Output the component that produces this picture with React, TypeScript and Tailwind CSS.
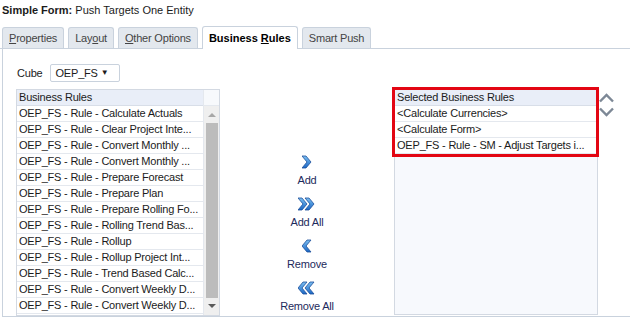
const leftRules = [
  'OEP_FS - Rule - Calculate Actuals',
  'OEP_FS - Rule - Clear Project Inte...',
  'OEP_FS - Rule - Convert Monthly ...',
  'OEP_FS - Rule - Convert Monthly ...',
  'OEP_FS - Rule - Prepare Forecast',
  'OEP_FS - Rule - Prepare Plan',
  'OEP_FS - Rule - Prepare Rolling Fo...',
  'OEP_FS - Rule - Rolling Trend Bas...',
  'OEP_FS - Rule - Rollup',
  'OEP_FS - Rule - Rollup Project Int...',
  'OEP_FS - Rule - Trend Based Calc...',
  'OEP_FS - Rule - Convert Weekly D...',
  'OEP_FS - Rule - Convert Weekly D...',
];

const selectedRules = [
  '<Calculate Currencies>',
  '<Calculate Form>',
  'OEP_FS - Rule - SM - Adjust Targets i...',
];

const tabs = [
  { label: 'Properties', u: 0 },
  { label: 'Layout', u: 3 },
  { label: 'Other Options', u: 0 },
  { label: 'Business Rules', u: 9, active: true },
  { label: 'Smart Push', u: -1 },
];

function Chevron({ dir, double }: { dir: 'right' | 'left'; double?: boolean }) {
  const one = (x: number) =>
    dir === 'right'
      ? `M${x} 1 L${x + 4} 1 L${x + 9} 7 L${x + 4} 13 L${x} 13 L${x + 5} 7 Z`
      : `M${x + 9} 1 L${x + 5} 1 L${x} 7 L${x + 5} 13 L${x + 9} 13 L${x + 4} 7 Z`;
  const xs = double ? [0, 7] : [0];
  return (
    <svg width={double ? 17 : 10} height="14" viewBox={`0 0 ${double ? 17 : 10} 14`}>
      <defs>
        <linearGradient id="chev" x1="0" y1="0" x2="0" y2="1">
          <stop offset="0" stopColor="#7cc0f2" />
          <stop offset="1" stopColor="#1a66c4" />
        </linearGradient>
      </defs>
      {xs.map((x) => (
        <path key={x} d={one(x)} fill="url(#chev)" stroke="#1d4f9a" strokeWidth="0.8" strokeLinejoin="round" />
      ))}
    </svg>
  );
}

function MoveButton({ label, dir, double }: { label: string; dir: 'right' | 'left'; double?: boolean }) {
  return (
    <div className="flex flex-col items-center">
      <Chevron dir={dir} double={double} />
      <span className="text-[11px] tracking-[-0.2px] leading-[16px] text-[#1d2a5c] mt-[3px]">{label}</span>
    </div>
  );
}

export default function App() {
  return (
    <div
      className="w-[630px] h-[319px] bg-white text-[#1b1b1b] overflow-hidden"
      style={{ fontFamily: '"Liberation Sans", Arial, sans-serif' }}
    >
      <div className="h-[26px] pl-[2px] pt-[3px] text-[11px] leading-[14px]">
        <span className="font-bold">Simple Form:</span> Push Targets One Entity
      </div>

      {/* tabs */}
      <div className="flex items-end gap-[4px] pl-[2px] h-[23px] border-b border-[#c9d2dd]">
        {tabs.map((t) => (
          <div
            key={t.label}
            className={
              t.active
                ? 'h-[23px] px-[6px] -mb-px bg-white border border-b-0 border-[#c9d2dd] rounded-t-[3px] flex items-center text-[11px] font-bold text-black whitespace-pre'
                : 'h-[21px] px-[6px] bg-[#e3e8ee] border border-b-0 border-[#c9d2dd] rounded-t-[3px] flex items-center text-[11px] tracking-[-0.2px] text-[#444] whitespace-pre'
            }
          >
            {t.u >= 0 ? (
              <span>
                {t.label.slice(0, t.u)}
                <span className="underline">{t.label[t.u]}</span>
                {t.label.slice(t.u + 1)}
              </span>
            ) : (
              <span>{t.label}</span>
            )}
          </div>
        ))}
      </div>

      {/* content */}
      <div className="ml-[2px] h-[268px] border-l border-b border-[#c9d2dd] pl-[13px] pt-[15px]">
        <div className="flex items-center gap-[7px] h-[18px] text-[11px] tracking-[-0.2px]">
          <span className="ml-[1px]">Cube</span>
          <div className="w-[70px] h-[18px] border border-[#c9d2dd] rounded-[2px] flex items-center px-[5px]">
            <span className="flex-1">OEP_FS</span>
            <span className="text-[8px] mr-[5px]">▼</span>
          </div>
        </div>

        <div className="flex mt-[7px]">
          {/* left list */}
          <div className="w-[204px] h-[227px] border border-[#d3d9e2] flex">
            <div className="flex-1 flex flex-col min-w-0">
              <div className="h-[16px] bg-[#e9eef8] border-b border-[#d8dee8] px-[2px] text-[11px] tracking-[-0.2px] leading-[15px]">
                Business Rules
              </div>
              {leftRules.map((r, i) => (
                <div
                  key={i}
                  className="h-[16px] border-b border-[#e4e8ee] px-[2px] text-[11px] tracking-[-0.2px] leading-[15px] whitespace-nowrap overflow-hidden"
                >
                  {r}
                </div>
              ))}
            </div>
            <div className="w-[16px] border-l border-[#e4e8ee] flex flex-col">
              <div className="h-[16px] bg-[#f7f9fc] border-b border-[#e4e8ee]" />
              <div className="flex-1 bg-[#efefef] flex flex-col items-center">
                <div className="h-[17px] flex items-center">
                  <svg width="8" height="5" viewBox="0 0 8 5">
                    <path d="M0 5 L4 1 L8 5 Z" fill="#a7a7a7" />
                  </svg>
                </div>
                <div className="w-[12px] flex-1 bg-[#bcbcbc]" />
                <div className="h-[17px] flex items-center">
                  <svg width="8" height="5" viewBox="0 0 8 5">
                    <path d="M0 0 L8 0 L4 4 Z" fill="#5a5a5a" />
                  </svg>
                </div>
              </div>
            </div>
          </div>

          {/* buttons */}
          <div className="w-[174px] flex flex-col items-center pt-[66px] gap-[9px]">
            <MoveButton label="Add" dir="right" />
            <MoveButton label="Add All" dir="right" double />
            <MoveButton label="Remove" dir="left" />
            <MoveButton label="Remove All" dir="left" double />
          </div>

          {/* right list */}
          <div className="relative w-[204px] h-[226px] border border-[#d3d9e2] bg-[#f7f9fd]">
            <div className="absolute -left-[3px] -top-[3px] w-[207px] h-[70px] border-[3px] border-[#e30613] pointer-events-none" />
            <div className="h-[16px] bg-[#e9eef8] border-b border-[#d8dee8] px-[2px] text-[11px] tracking-[-0.2px] leading-[15px]">
              Selected Business Rules
            </div>
            {selectedRules.map((r, i) => (
              <div
                key={i}
                className="h-[16px] bg-white border-b border-[#e4e8ee] px-[2px] text-[11px] tracking-[-0.2px] leading-[15px] whitespace-nowrap overflow-hidden"
              >
                {r}
              </div>
            ))}
          </div>

          {/* up/down */}
          <div className="flex flex-col gap-[4px] pl-[1px] pt-[4px]">
            <svg width="15" height="10" viewBox="0 0 15 10">
              <path d="M1 8.5 L7.5 2 L14 8.5" fill="none" stroke="#7d8896" strokeWidth="2.4" />
            </svg>
            <svg width="15" height="10" viewBox="0 0 15 10">
              <path d="M1 1.5 L7.5 8 L14 1.5" fill="none" stroke="#7d8896" strokeWidth="2.4" />
            </svg>
          </div>
        </div>
      </div>
    </div>
  );
}
